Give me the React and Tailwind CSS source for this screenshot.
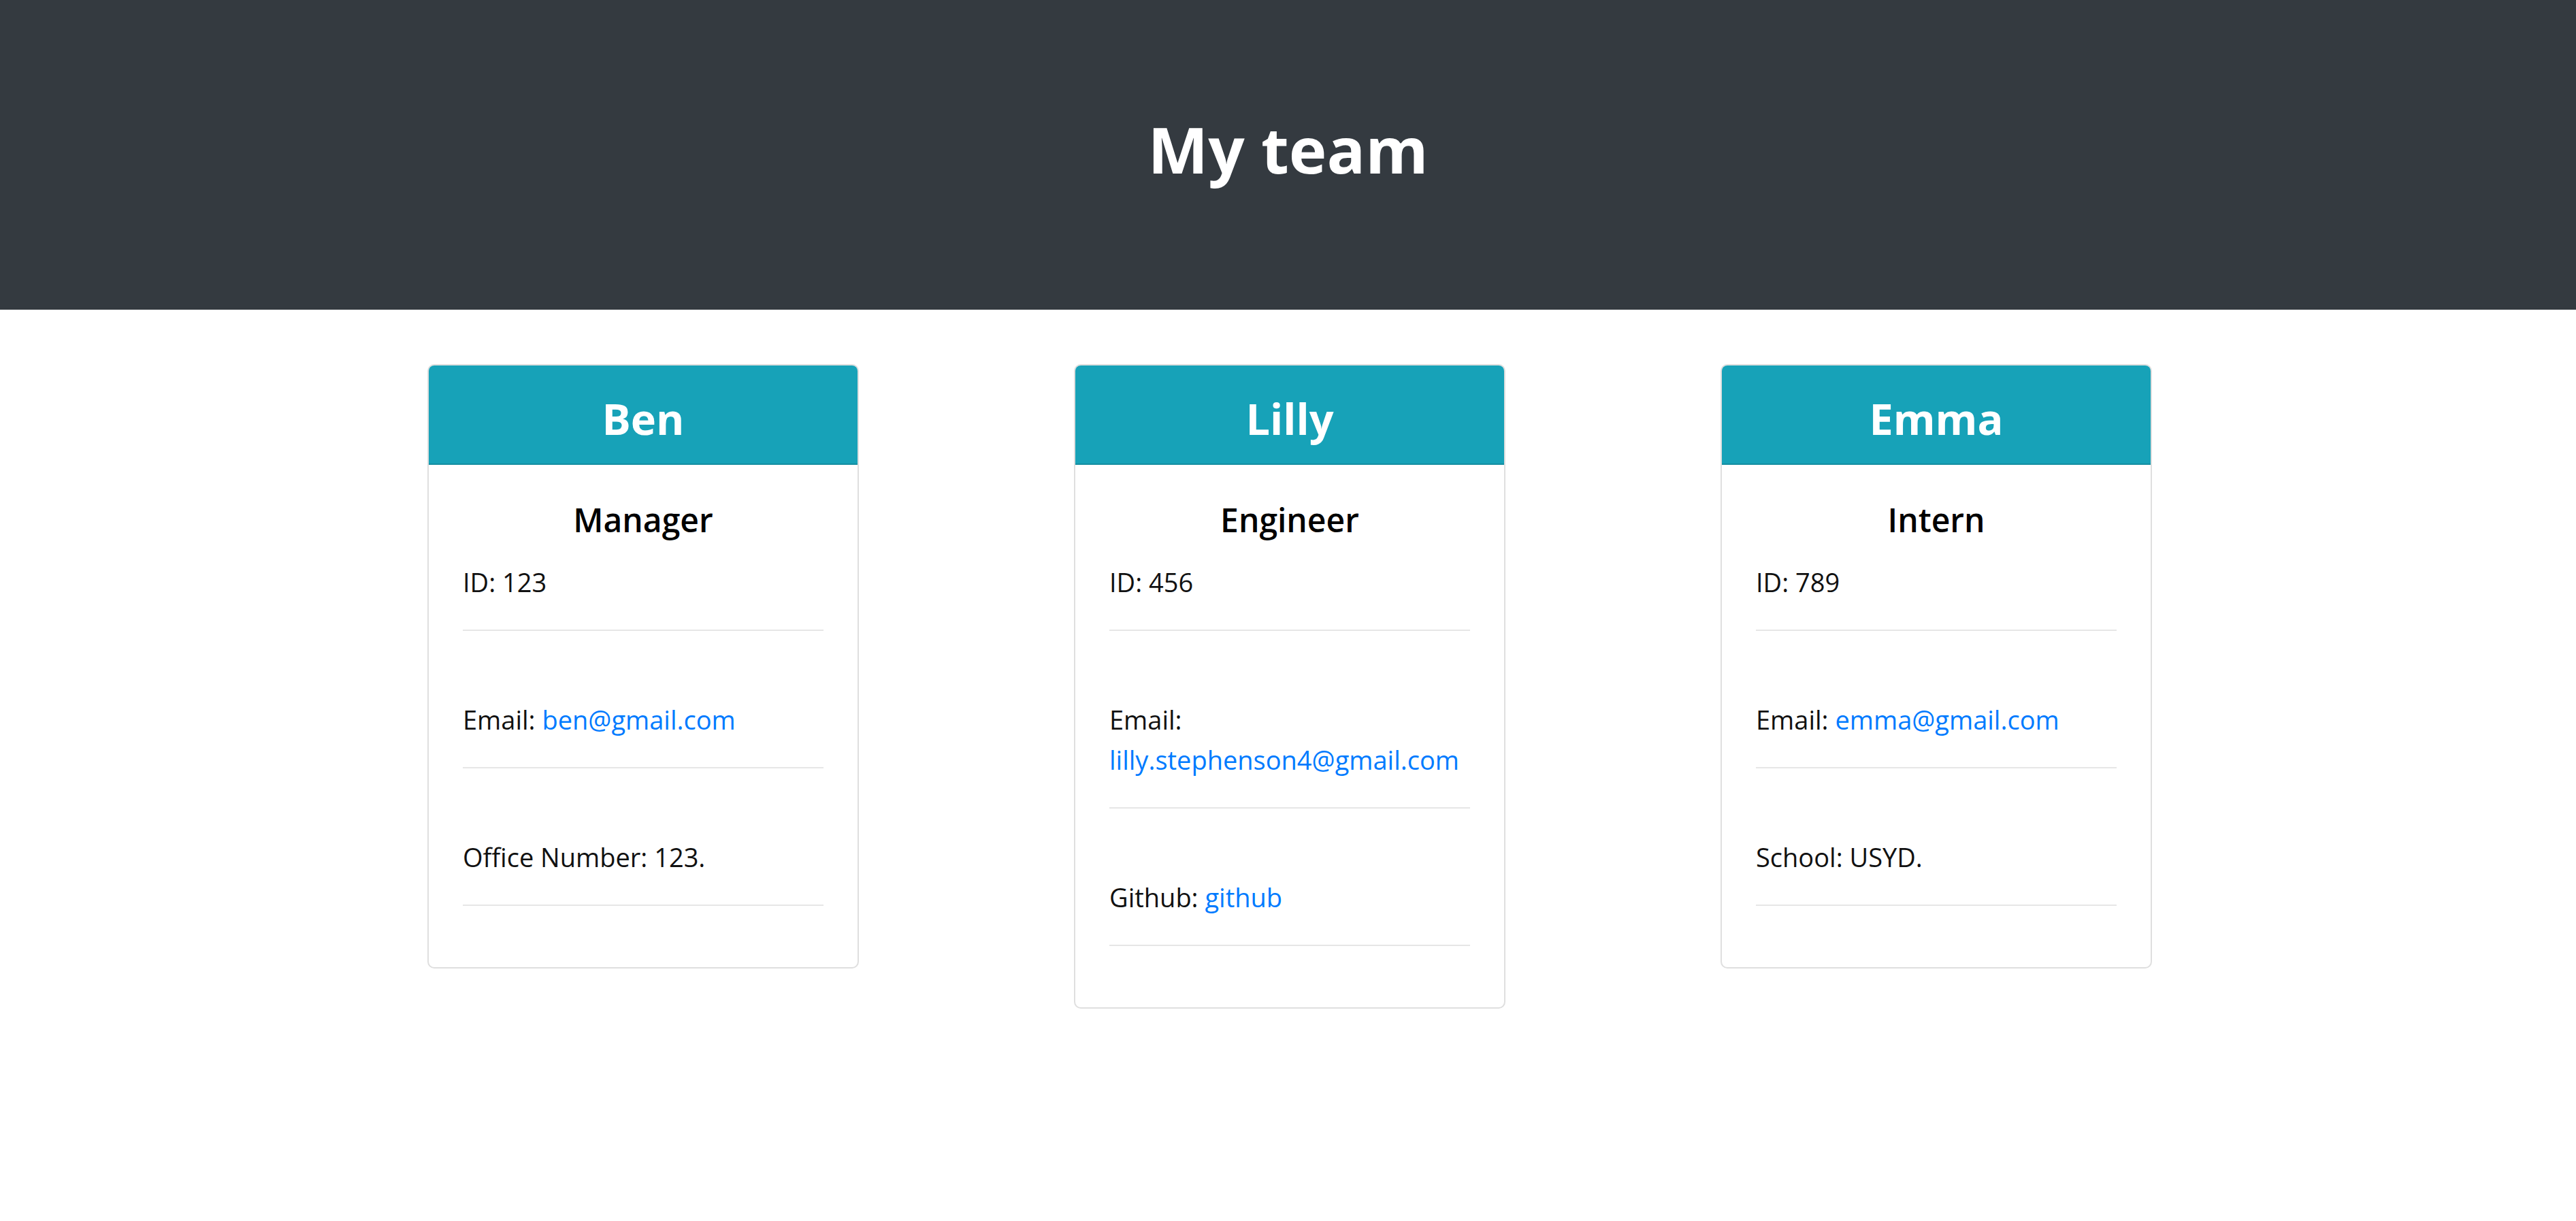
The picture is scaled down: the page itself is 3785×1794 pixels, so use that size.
export default function App() {
  const cards = [
    {
      name: "Ben",
      role: "Manager",
      rows: [
        { label: "ID: ", value: "123" },
        { label: "Email: ", link: "ben@gmail.com" },
        { label: "Office Number: ", value: "123." },
      ],
    },
    {
      name: "Lilly",
      role: "Engineer",
      rows: [
        { label: "ID: ", value: "456" },
        { label: "Email: ", link: "lilly.stephenson4@gmail.com" },
        { label: "Github: ", link: "github" },
      ],
    },
    {
      name: "Emma",
      role: "Intern",
      rows: [
        { label: "ID: ", value: "789" },
        { label: "Email: ", link: "emma@gmail.com" },
        { label: "School: ", value: "USYD." },
      ],
    },
  ];

  return (
    <div className="min-h-screen bg-white font-['Open_Sans',sans-serif] text-[#111]">
      <header className="h-[455px] bg-[#343a40] pt-[163px] text-center">
        <h1 className="text-[94px] leading-[1.2] font-bold text-white">My team</h1>
      </header>
      <main className="flex items-start gap-[316px] pl-[628px] pt-[80px]">
        {cards.map((c) => (
          <div
            key={c.name}
            className="w-[634px] overflow-hidden rounded-[10px] border-2 border-[#dfdfdf] bg-white"
          >
            <div className="h-[146px] border-b-2 border-[#148ea1] bg-[#17a2b8] pt-[40px] text-center">
              <h2 className="text-[63px] leading-[1.2] font-bold text-white">{c.name}</h2>
            </div>
            <div className="px-[50px] pt-[52px] pb-[90px]">
              <h5 className="mb-[33px] text-center text-[48px] leading-[1.2] font-semibold text-black">
                {c.role}
              </h5>
              {c.rows.map((r, i) => (
                <div
                  key={i}
                  className={
                    i === 0
                      ? "border-b-2 border-[#e6e6e6] pb-[40px] text-[38px] leading-[59px]"
                      : "border-b-2 border-[#e6e6e6] pt-[101px] pb-[40px] text-[38px] leading-[59px]"
                  }
                >
                  {r.label}
                  {r.link ? (
                    <a href="#" className="text-[#007bff]">
                      {r.link}
                    </a>
                  ) : (
                    r.value
                  )}
                </div>
              ))}
            </div>
          </div>
        ))}
      </main>
    </div>
  );
}
